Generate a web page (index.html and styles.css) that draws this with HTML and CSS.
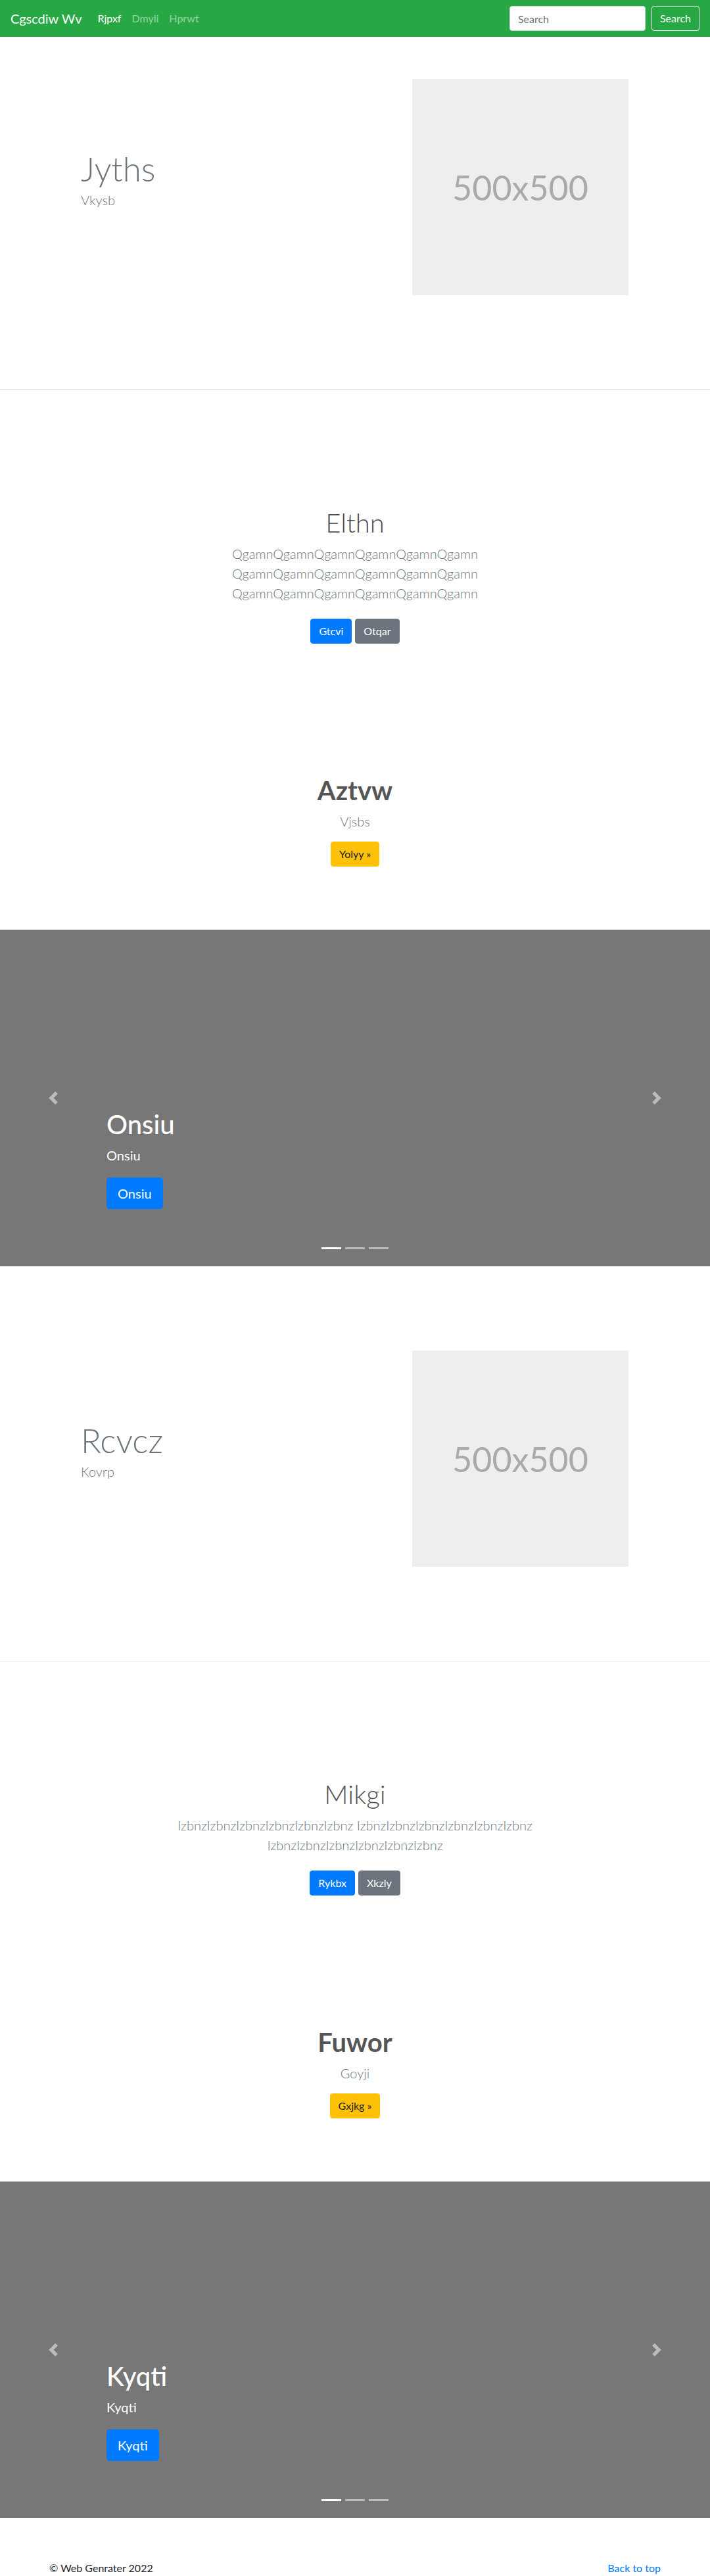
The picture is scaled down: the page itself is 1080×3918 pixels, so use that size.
FILE: index.html
```html
<!DOCTYPE html>
<html lang="en">
<head>
<meta charset="utf-8">
<title>Cgscdiw Wv</title>
<link rel="stylesheet" href="styles.css">
</head>
<body>
<nav class="navbar">
  <a class="brand" href="#">Cgscdiw Wv</a>
  <ul class="nav-links">
    <li><a class="nav-link active" href="#">Rjpxf</a></li>
    <li><a class="nav-link" href="#">Dmyli</a></li>
    <li><a class="nav-link" href="#">Hprwt</a></li>
  </ul>
  <form class="search">
    <input class="search-input" type="text" placeholder="Search">
    <button class="search-btn" type="button">Search</button>
  </form>
</nav>

<main>
  <section class="hero">
    <div class="hero-inner">
      <div class="hero-text">
        <h1 class="hero-title">Jyths</h1>
        <p class="hero-lead">Vkysb</p>
      </div>
      <div class="placeholder">500x500</div>
    </div>
  </section>

  <section class="intro">
    <h1 class="intro-title">Elthn</h1>
    <p class="intro-text">QgamnQgamnQgamnQgamnQgamnQgamn QgamnQgamnQgamnQgamnQgamnQgamn QgamnQgamnQgamnQgamnQgamnQgamn</p>
    <div class="btn-row">
      <a class="btn btn-primary" href="#">Gtcvi</a>
      <a class="btn btn-secondary" href="#">Otqar</a>
    </div>
  </section>

  <section class="feature">
    <h1 class="feature-title">Aztvw</h1>
    <p class="feature-text">Vjsbs</p>
    <a class="btn btn-warning" href="#">Yolyy &raquo;</a>
  </section>

  <div class="carousel">
    <ol class="carousel-indicators">
      <li class="indicator active"></li>
      <li class="indicator"></li>
      <li class="indicator"></li>
    </ol>
    <div class="carousel-caption">
      <h1 class="caption-title">Onsiu</h1>
      <p class="caption-text">Onsiu</p>
      <a class="btn btn-primary btn-lg" href="#">Onsiu</a>
    </div>
    <a class="carousel-control prev" href="#"><svg width="20" height="20" viewBox="0 0 8 8"><path fill="#fff" d="M5.25 0l-4 4 4 4 1.5-1.5L4.25 4l2.5-2.5L5.25 0z"/></svg></a>
    <a class="carousel-control next" href="#"><svg width="20" height="20" viewBox="0 0 8 8"><path fill="#fff" d="M2.75 0l-1.5 1.5L3.75 4l-2.5 2.5L2.75 8l4-4-4-4z"/></svg></a>
  </div>

  <section class="hero">
    <div class="hero-inner">
      <div class="hero-text">
        <h1 class="hero-title">Rcvcz</h1>
        <p class="hero-lead">Kovrp</p>
      </div>
      <div class="placeholder">500x500</div>
    </div>
  </section>

  <section class="intro">
    <h1 class="intro-title">Mikgi</h1>
    <p class="intro-text">IzbnzIzbnzIzbnzIzbnzIzbnzIzbnz IzbnzIzbnzIzbnzIzbnzIzbnzIzbnz IzbnzIzbnzIzbnzIzbnzIzbnzIzbnz</p>
    <div class="btn-row">
      <a class="btn btn-primary" href="#">Rykbx</a>
      <a class="btn btn-secondary" href="#">Xkzly</a>
    </div>
  </section>

  <section class="feature">
    <h1 class="feature-title">Fuwor</h1>
    <p class="feature-text">Goyji</p>
    <a class="btn btn-warning" href="#">Gxjkg &raquo;</a>
  </section>

  <div class="carousel">
    <ol class="carousel-indicators">
      <li class="indicator active"></li>
      <li class="indicator"></li>
      <li class="indicator"></li>
    </ol>
    <div class="carousel-caption">
      <h1 class="caption-title">Kyqti</h1>
      <p class="caption-text">Kyqti</p>
      <a class="btn btn-primary btn-lg" href="#">Kyqti</a>
    </div>
    <a class="carousel-control prev" href="#"><svg width="20" height="20" viewBox="0 0 8 8"><path fill="#fff" d="M5.25 0l-4 4 4 4 1.5-1.5L4.25 4l2.5-2.5L5.25 0z"/></svg></a>
    <a class="carousel-control next" href="#"><svg width="20" height="20" viewBox="0 0 8 8"><path fill="#fff" d="M2.75 0l-1.5 1.5L3.75 4l-2.5 2.5L2.75 8l4-4-4-4z"/></svg></a>
  </div>
</main>

<footer class="footer">
  <p>&copy; Web Genrater 2022</p>
  <p><a href="#">Back to top</a></p>
</footer>
</body>
</html>
```

FILE: styles.css
```css
* { box-sizing: border-box; }

body {
  margin: 0;
  font-family: Lato, "Noto Sans", "Open Sans", sans-serif;
  font-size: 16px;
  line-height: 1.5;
  color: #212529;
  background: #fff;
}

h1, p { margin: 0; }

/* Navbar */
.navbar {
  display: flex;
  align-items: center;
  height: 56px;
  padding: 0 16px;
  background: #28a745;
}
.brand {
  font-size: 20px;
  line-height: 30px;
  color: #fff;
  margin-right: 16px;
  text-decoration: none;
}
.nav-links {
  display: flex;
  list-style: none;
  margin: 0;
  padding: 0;
}
.nav-link {
  display: block;
  padding: 8px;
  color: rgba(255, 255, 255, 0.5);
  text-decoration: none;
}
.nav-link.active { color: #fff; }

.search {
  margin: 0 0 0 auto;
  display: flex;
  gap: 9px;
}
.search-input {
  width: 207px;
  height: 38px;
  padding: 6px 12px;
  border: 1px solid #ced4da;
  border-radius: 4px;
  font: inherit;
  color: #495057;
  background: #fff;
}
.search-input::placeholder { color: #6c757d; }
.search-btn {
  height: 38px;
  padding: 6px 12px;
  border: 1px solid #f8f9fa;
  border-radius: 4px;
  background: transparent;
  color: #f8f9fa;
  font: inherit;
}

/* Hero */
.hero {
  padding: 64px 0 143px;
  border-bottom: 1px solid #e5e5e5;
}
.hero-inner {
  width: 960px;
  margin: 0 auto;
  padding: 0 64px 0 63px;
  display: grid;
  grid-template-columns: 1fr 1fr;
  align-items: center;
}
.hero-title {
  font-size: 51px;
  font-weight: 300;
  line-height: 1.2;
  color: #6c757d;
  margin-bottom: 1px;
}
.hero-lead {
  font-size: 20px;
  font-weight: 300;
  color: #6c757d;
  margin-bottom: 24px;
}
.placeholder {
  justify-self: end;
  width: 329px;
  height: 329px;
  background: #eee;
  color: #aaa;
  font-size: 52px;
  display: flex;
  align-items: center;
  justify-content: center;
}

/* Intro */
.intro {
  padding-top: 178px;
  text-align: center;
}
.intro-title {
  font-size: 40px;
  font-weight: 300;
  line-height: 1.2;
  color: #4f4f4f;
  margin-bottom: 8px;
}
.intro-text {
  width: 610px;
  margin: 0 auto 24px;
  font-size: 20px;
  font-weight: 300;
  color: #6c757d;
}
.btn-row {
  display: flex;
  justify-content: center;
  gap: 5px;
}

/* Buttons */
.btn {
  display: inline-block;
  padding: 6px 12px;
  border: 1px solid transparent;
  border-radius: 4px;
  font-size: 16px;
  line-height: 24px;
  color: #fff;
  text-decoration: none;
}
.btn-primary { background: #007bff; border-color: #007bff; }
.btn-secondary { background: #6c757d; border-color: #6c757d; }
.btn-warning { background: #ffc107; border-color: #ffc107; color: #212529; }
.btn-lg {
  padding: 8px 16px;
  font-size: 20px;
  line-height: 30px;
  border-radius: 5px;
}

/* Feature */
.feature {
  padding: 199px 0 96px;
  text-align: center;
}
.feature-title {
  font-size: 40px;
  font-weight: 700;
  line-height: 1.2;
  color: #555;
  margin-bottom: 8px;
}
.feature-text {
  font-size: 20px;
  font-weight: 300;
  color: #6c757d;
  margin-bottom: 16px;
}

/* Carousel */
.carousel {
  position: relative;
  height: 512px;
  background: #777;
  margin-bottom: 64px;
  overflow: hidden;
}
.carousel-caption {
  position: absolute;
  left: 15%;
  right: 15%;
  bottom: 87px;
  display: flex;
  flex-direction: column;
  align-items: flex-start;
  color: #fff;
  z-index: 2;
}
.caption-title {
  font-size: 40px;
  font-weight: 500;
  line-height: 1.2;
  margin-bottom: 8px;
}
.caption-text {
  font-size: 20px;
  line-height: 30px;
  margin-bottom: 19px;
}

.carousel-control {
  position: absolute;
  top: 0;
  bottom: 0;
  width: 15%;
  display: flex;
  align-items: center;
  justify-content: center;
  opacity: 0.5;
}
.carousel-control.prev { left: 0; }
.carousel-control.next { right: 0; }

.carousel-indicators {
  position: absolute;
  left: 0;
  right: 0;
  bottom: 26px;
  display: flex;
  justify-content: center;
  gap: 6px;
  list-style: none;
  margin: 0;
  padding: 0;
  z-index: 3;
}
.indicator {
  width: 30px;
  height: 3px;
  background: #fff;
  opacity: 0.5;
}
.indicator.active { opacity: 1; }

/* Footer */
.footer {
  width: 960px;
  margin: 0 auto;
  padding: 0 15px;
  display: flex;
  justify-content: space-between;
}
.footer a {
  color: #007bff;
  text-decoration: none;
}
```
